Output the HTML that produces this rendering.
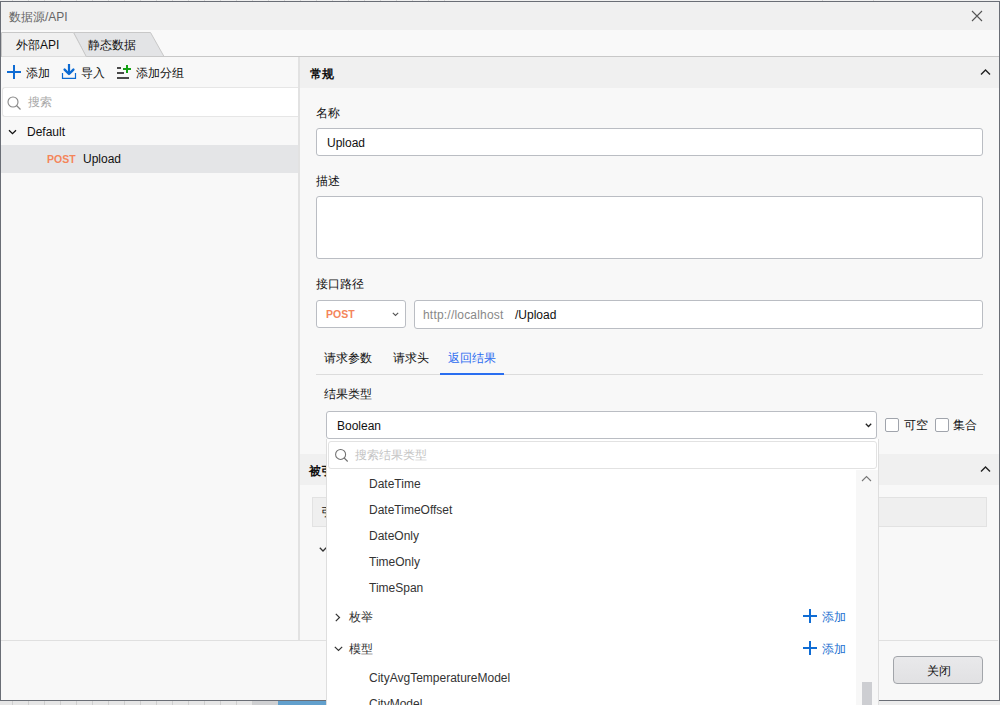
<!DOCTYPE html>
<html><head><meta charset="utf-8">
<style>
*{box-sizing:border-box;margin:0;padding:0}
html,body{width:1000px;height:705px;overflow:hidden;background:#f3f3f3;font-family:"Liberation Sans",sans-serif;font-size:12px;color:#222}
.a{position:absolute}
.t{position:absolute;white-space:nowrap;line-height:1}
</style></head><body>
<!-- background strip -->
<div class="a" style="left:0;top:0;width:1000px;height:705px;background:#ececec"></div>
<div class="a" style="left:0;top:0;width:1000px;height:1px;background:#f0f0f0"></div><div class="a" style="left:0;top:0;width:456px;height:1px;background:repeating-linear-gradient(90deg,#efefef 0 12px,#d6d6d6 12px 13px,#efefef 13px 16px)"></div><div class="a" style="left:822px;top:0;width:1px;height:1px;background:#d6d6d6"></div><div class="a" style="left:873px;top:0;width:1px;height:1px;background:#d6d6d6"></div>
<div class="a" style="left:0;top:701px;width:878px;height:4px;background:repeating-linear-gradient(90deg,#e6e6e6 0 12px,#cfcfcf 12px 13px,#e6e6e6 13px 16px)"></div>
<div class="a" style="left:253px;top:701px;width:25px;height:4px;background:#cfd0d2"></div>
<div class="a" style="left:278px;top:701px;width:48px;height:4px;background:#62a0cd"></div>
<!-- window -->
<div class="a" style="left:0;top:1px;width:1000px;height:700px;background:#f8f8f8;border:1px solid #6a6e76"></div>
<!-- title bar -->
<div class="a" style="left:1px;top:2px;width:998px;height:28px;background:#f0f0f0"></div>
<div class="t" style="left:9px;top:11px;color:#666">数据源/API</div>
<svg class="a" style="left:971px;top:10px" width="12" height="12"><path d="M1 1L11 11M11 1L1 11" stroke="#555" stroke-width="1.1" fill="none"/></svg>
<!-- tab strip -->
<div class="a" style="left:1px;top:30px;width:998px;height:27px;background:#f9f9f9"></div>
<div class="a" style="left:86px;top:56px;width:913px;height:1px;background:#c8c8c8"></div>
<svg class="a" style="left:0;top:30px" width="200" height="28">
<path d="M73.5 2.5L150.5 2.5L164 26.5L86 26.5Z" fill="#e3e4e6" stroke="#c8c8c8" stroke-width="1"/>
<path d="M1.5 2.5L73.5 2.5L86.5 27L1.5 27Z" fill="#f0f0f0" stroke="#c8c8c8" stroke-width="1"/>
</svg>
<div class="t" style="left:16px;top:39px;font-size:12px;color:#111">外部API</div>
<div class="t" style="left:88px;top:39px;font-size:12px;color:#111">静态数据</div>

<!-- left panel -->
<div class="a" style="left:1px;top:57px;width:297px;height:583px;background:#f8f8f8"></div>
<div class="a" style="left:298px;top:57px;width:2px;height:583px;background:#e2e2e2"></div>
<!-- toolbar -->
<svg class="a" style="left:7px;top:65px" width="14" height="14"><path d="M7 0V14M0 7H14" stroke="#0f6cd4" stroke-width="2"/></svg>
<div class="t" style="left:26px;top:67px;color:#111">添加</div>
<svg class="a" style="left:59px;top:61px" width="20" height="20"><path d="M10 3V13" stroke="#0b6ad2" stroke-width="2.2" fill="none"/><path d="M5.6 8.6L10 13L14.4 8.6" stroke="#0b6ad2" stroke-width="2.4" stroke-linecap="round" stroke-linejoin="round" fill="none"/><path d="M3.5 12V17.4H16.5V12" stroke="#0b6ad2" stroke-width="1.2" fill="none"/></svg>
<div class="t" style="left:81px;top:67px;color:#111">导入</div>
<svg class="a" style="left:114px;top:62px" width="20" height="20"><path d="M3 6H7M3 11H10M3 16H15" stroke="#4a4a4a" stroke-width="2"/><path d="M13 3V11M9 7H17" stroke="#13a014" stroke-width="2"/></svg>
<div class="t" style="left:136px;top:67px;color:#111">添加分组</div>
<!-- search -->
<div class="a" style="left:2px;top:87px;width:296px;height:30px;background:#fff;border:1px solid #e6e6e6;border-right:none;border-radius:3px 0 0 3px"></div>
<svg class="a" style="left:7px;top:96px" width="14" height="14"><circle cx="6" cy="6" r="5" stroke="#888" stroke-width="1.1" fill="none"/><path d="M9.5 9.5L13.5 13.5" stroke="#888" stroke-width="1.2"/></svg>
<div class="t" style="left:28px;top:96px;color:#a8a8a8">搜索</div>
<!-- tree -->
<svg class="a" style="left:8px;top:129px" width="9" height="6"><path d="M1 1.2L4.5 4.6L8 1.2" stroke="#111" stroke-width="1.3" fill="none"/></svg>
<div class="t" style="left:27px;top:126px;color:#111">Default</div>
<div class="a" style="left:1px;top:145px;width:297px;height:28px;background:#e4e5e7"></div>
<div class="t" style="left:47px;top:154px;font-size:10.5px;font-weight:bold;color:#f4855a">POST</div>
<div class="t" style="left:83px;top:153px;color:#111">Upload</div>

<!-- right panel header -->
<div class="a" style="left:300px;top:57px;width:699px;height:31px;background:#f0f0f0"></div>
<div class="t" style="left:310px;top:68px;font-weight:700;color:#111">常规</div>
<svg class="a" style="left:980px;top:69px" width="12" height="8"><path d="M1 5.5L5.5 1L10 5.5" stroke="#222" stroke-width="1.4" fill="none"/></svg>

<!-- form -->
<div class="t" style="left:316px;top:107px;color:#111">名称</div>
<div class="a" style="left:316px;top:128px;width:667px;height:28px;background:#fff;border:1px solid #babdc3;border-radius:3px"></div>
<div class="t" style="left:327px;top:137px;color:#111">Upload</div>
<div class="t" style="left:316px;top:175px;color:#111">描述</div>
<div class="a" style="left:316px;top:196px;width:667px;height:63px;background:#fff;border:1px solid #babdc3;border-radius:3px"></div>

<!-- path -->
<div class="t" style="left:316px;top:278px;color:#111">接口路径</div>
<div class="a" style="left:316px;top:300px;width:90px;height:28px;background:#fff;border:1px solid #babdc3;border-radius:3px"></div>
<div class="t" style="left:326px;top:309px;font-size:10.5px;font-weight:bold;color:#f4855a">POST</div>
<svg class="a" style="left:392px;top:312px" width="7" height="5"><path d="M0.8 0.8L3.5 3.5L6.2 0.8" stroke="#555" stroke-width="1.1" fill="none"/></svg>
<div class="a" style="left:414px;top:300px;width:569px;height:29px;background:#fff;border:1px solid #babdc3;border-radius:3px"></div>
<div class="t" style="left:423px;top:309px;letter-spacing:0.2px;color:#888">http://localhost</div>
<div class="t" style="left:515px;top:309px;font-size:12px;color:#111">/Upload</div>
<!-- sub tabs -->
<div class="t" style="left:324px;top:352px;color:#111">请求参数</div>
<div class="t" style="left:393px;top:352px;color:#111">请求头</div>
<div class="t" style="left:448px;top:352px;color:#2c6cf0">返回结果</div>
<div class="a" style="left:316px;top:374px;width:667px;height:1px;background:#dcdcdc"></div>
<div class="a" style="left:440px;top:373px;width:64px;height:2px;background:#2a6ef0"></div>
<div class="t" style="left:324px;top:388px;color:#111">结果类型</div>
<!-- combo -->
<div class="a" style="left:326px;top:411px;width:551px;height:28px;background:#fff;border:1px solid #babdc3;border-radius:3px"></div>
<div class="t" style="left:337px;top:420px;font-size:12px;color:#111">Boolean</div>
<svg class="a" style="left:865px;top:423px" width="7" height="5"><path d="M0.8 0.8L3.5 3.5L6.2 0.8" stroke="#222" stroke-width="1.3" fill="none"/></svg>
<div class="a" style="left:885px;top:418px;width:14px;height:14px;background:#fff;border:1px solid #a0a4ac;border-radius:2px"></div>
<div class="t" style="left:904px;top:419px;color:#111">可空</div>
<div class="a" style="left:935px;top:418px;width:14px;height:14px;background:#fff;border:1px solid #a0a4ac;border-radius:2px"></div>
<div class="t" style="left:953px;top:419px;color:#111">集合</div>

<!-- section 2 -->
<div class="a" style="left:300px;top:454px;width:699px;height:31px;background:#f0f0f0"></div>
<div class="t" style="left:309px;top:465px;font-weight:700;color:#111">被引用</div>
<svg class="a" style="left:980px;top:466px" width="12" height="8"><path d="M1 5.5L5.5 1L10 5.5" stroke="#222" stroke-width="1.4" fill="none"/></svg>
<div class="a" style="left:312px;top:497px;width:675px;height:30px;background:#efefef;border:1px solid #e2e2e2"></div>
<div class="t" style="left:321px;top:506px;color:#111">引用</div>
<svg class="a" style="left:319px;top:547px" width="8" height="6"><path d="M0.8 0.8L4 4L7.2 0.8" stroke="#333" stroke-width="1.3" fill="none"/></svg>

<!-- bottom -->
<div class="a" style="left:1px;top:640px;width:997px;height:1px;background:#e0e0e0"></div>
<div class="a" style="left:893px;top:656px;width:90px;height:28px;background:linear-gradient(#e9e9eb,#e1e1e3);border:1px solid #a2a5aa;border-radius:4px"></div>
<div class="t" style="left:927px;top:665px;color:#111">关闭</div>

<!-- popup -->
<div class="a" style="left:326px;top:439px;width:553px;height:270px;background:#fff;border:1px solid #dedede;border-top:none"></div>
<div class="a" style="left:328px;top:441px;width:549px;height:28px;background:#fff;border:1px solid #e2e2e2;border-radius:3px"></div>
<svg class="a" style="left:334px;top:448px" width="16" height="16"><circle cx="6.6" cy="6.4" r="5" stroke="#707070" stroke-width="1.05" fill="none"/><path d="M10.2 10L13.7 13.5" stroke="#707070" stroke-width="1.1"/></svg>
<div class="t" style="left:355px;top:449px;color:#c4c4c4">搜索结果类型</div>
<div class="a" style="left:856px;top:470px;width:22px;height:240px;background:#f7f7f7"></div>
<svg class="a" style="left:861px;top:475px" width="12" height="8"><path d="M1 6L5.5 1.5L10 6" stroke="#777" stroke-width="1.1" fill="none"/></svg>
<div class="a" style="left:862px;top:682px;width:10px;height:30px;background:#cdced2"></div>
<div class="t" style="left:369px;top:478px;color:#333">DateTime</div>
<div class="t" style="left:369px;top:504px;color:#333">DateTimeOffset</div>
<div class="t" style="left:369px;top:530px;color:#333">DateOnly</div>
<div class="t" style="left:369px;top:556px;color:#333">TimeOnly</div>
<div class="t" style="left:369px;top:582px;color:#333">TimeSpan</div>
<svg class="a" style="left:335px;top:613px" width="6" height="9"><path d="M0.8 0.8L4.5 4.5L0.8 8.2" stroke="#333" stroke-width="1.2" fill="none"/></svg>
<div class="t" style="left:349px;top:611px;color:#333">枚举</div>
<svg class="a" style="left:803px;top:609px" width="14" height="14"><path d="M7 0V14M0 7H14" stroke="#0f6cd4" stroke-width="2"/></svg>
<div class="t" style="left:822px;top:611px;color:#1a6fd0">添加</div>
<svg class="a" style="left:334px;top:646px" width="9" height="6"><path d="M0.8 0.8L4.5 4.5L8.2 0.8" stroke="#333" stroke-width="1.2" fill="none"/></svg>
<div class="t" style="left:349px;top:643px;color:#333">模型</div>
<svg class="a" style="left:803px;top:641px" width="14" height="14"><path d="M7 0V14M0 7H14" stroke="#0f6cd4" stroke-width="2"/></svg>
<div class="t" style="left:822px;top:643px;color:#1a6fd0">添加</div>
<div class="t" style="left:369px;top:672px;color:#333">CityAvgTemperatureModel</div>
<div class="t" style="left:369px;top:698px;color:#333">CityModel</div>

</body></html>
